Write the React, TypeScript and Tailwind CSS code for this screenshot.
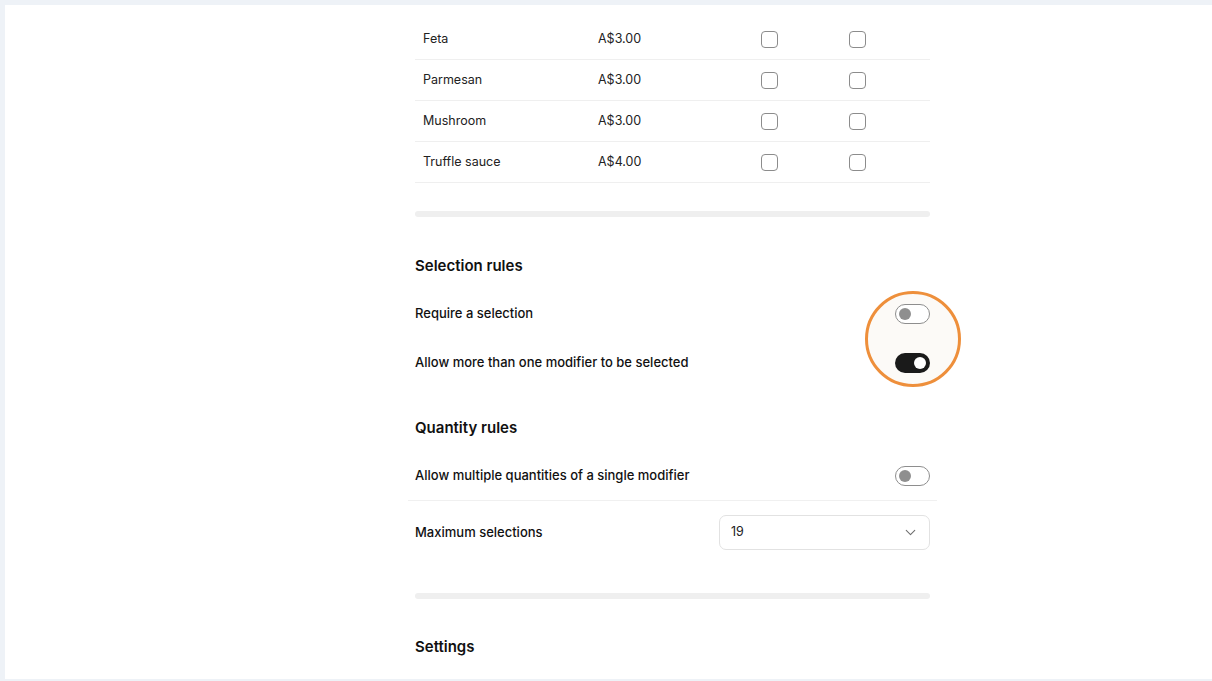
import { ChevronDown } from "lucide-react";

const modifiers = [
  { name: "Feta", price: "A$3.00" },
  { name: "Parmesan", price: "A$3.00" },
  { name: "Mushroom", price: "A$3.00" },
  { name: "Truffle sauce", price: "A$4.00" },
];

function Checkbox() {
  return <span className="block h-[17px] w-[17px] rounded-[4px] border-[1.5px] border-[#8c8c8c] bg-white" />;
}

function Toggle({ on }: { on?: boolean }) {
  return on ? (
    <span className="relative z-10 flex h-[20px] w-[35px] items-center justify-end rounded-full bg-[#1a1a1a] px-[4px]">
      <span className="h-[12px] w-[12px] rounded-full bg-white" />
    </span>
  ) : (
    <span className="relative z-10 flex h-[20px] w-[35px] items-center rounded-full border-[1.5px] border-[#8e8e8e] bg-white px-[3px]">
      <span className="h-[12px] w-[12px] rounded-full bg-[#8f8f8f]" />
    </span>
  );
}

function Divider({ top }: { top: string }) {
  return <div className={`${top} h-[6px] rounded-sm bg-[#efefef]`} />;
}

function Heading({ children, className }: { children: string; className: string }) {
  return <h2 className={`${className} h-[22px] text-[15px] leading-[22px] font-semibold text-[#111]`}>{children}</h2>;
}

function ToggleRow({ label, on, className }: { label: string; on?: boolean; className: string }) {
  return (
    <div className={`${className} flex items-center justify-between`}>
      <span className="text-[13px] font-medium text-[#111]">{label}</span>
      <Toggle on={on} />
    </div>
  );
}

export default function App() {
  return (
    <div
      className="h-[681px] w-[1212px] overflow-hidden bg-[#eef2f7] pt-[5px] pb-[2px] pl-[5px]"
      style={{ fontFamily: "Inter, 'Noto Sans', sans-serif" }}
    >
      <div className="h-full bg-white pt-[14px] pl-[410px]">
        <div className="w-[515px]">
          {modifiers.map((m) => (
            <div
              key={m.name}
              className="grid h-[41px] grid-cols-[183px_163px_88px_1fr] items-center border-b border-[#efefef] text-[12.5px] text-[#222]"
            >
              <span className="pl-2">{m.name}</span>
              <span>{m.price}</span>
              <Checkbox />
              <Checkbox />
            </div>
          ))}

          <Divider top="mt-[28px]" />

          <Heading className="mt-[38px]">Selection rules</Heading>
          <div className="relative mt-[12px]">
            <span className="absolute top-[2px] left-[450px] h-[96px] w-[96px] rounded-full border-[3px] border-[#ee8f3b] bg-[#fcfaf7]" />
            <ToggleRow className="relative h-[49px]" label="Require a selection" />
            <ToggleRow className="relative h-[49px]" label="Allow more than one modifier to be selected" on />
          </div>

          <Heading className="mt-[30px]">Quantity rules</Heading>
          <div className="mx-[-7px] mt-[13px] border-b border-[#f0f0f0] px-[7px]">
            <ToggleRow className="h-[48px]" label="Allow multiple quantities of a single modifier" />
          </div>
          <div className="mt-[14px] flex items-center justify-between">
            <span className="text-[13px] font-medium text-[#111]">Maximum selections</span>
            <div className="flex h-[35px] w-[211px] items-center justify-between rounded-[7px] border border-[#e2e2e2] pr-[10px] pl-[11px]">
              <span className="text-[12.5px] text-[#222]">19</span>
              <ChevronDown size={17} strokeWidth={1.5} className="text-[#6f6f6f]" />
            </div>
          </div>

          <Divider top="mt-[43px]" />

          <Heading className="mt-[37px]">Settings</Heading>
        </div>
      </div>
    </div>
  );
}
